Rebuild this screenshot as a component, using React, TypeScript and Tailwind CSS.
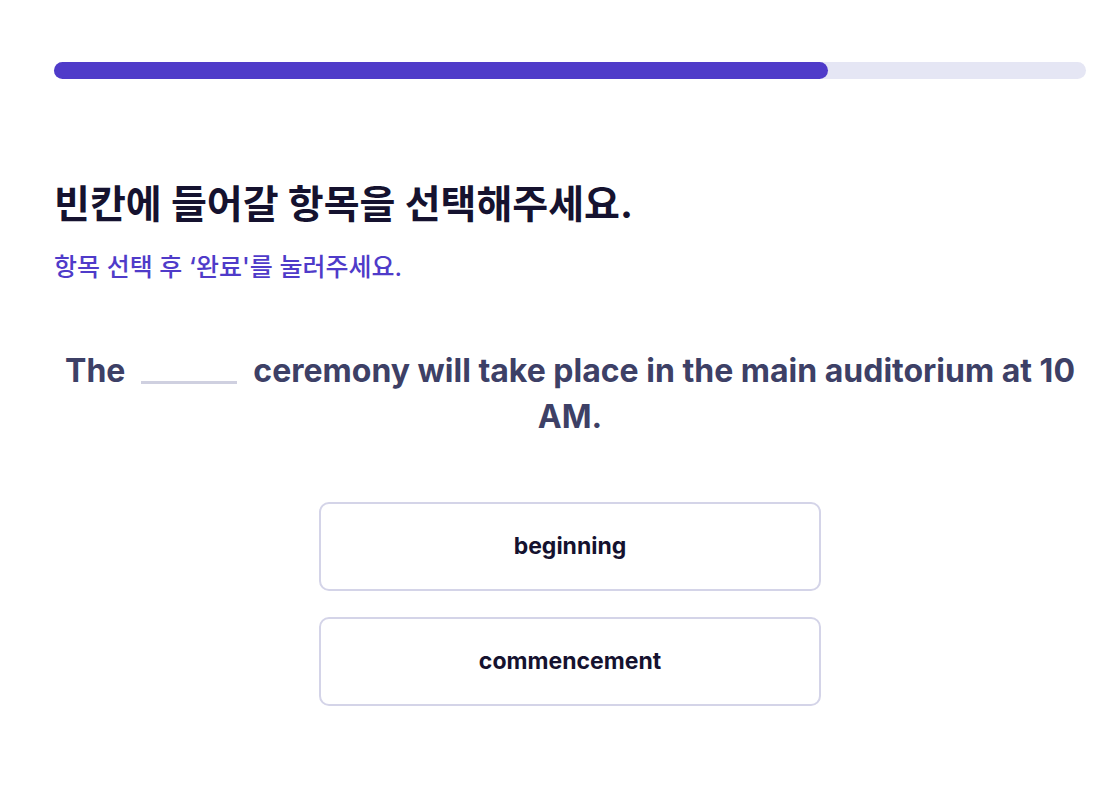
const FONT = "font-['Inter','Noto_Sans_CJK_KR',sans-serif]";

const OPTIONS = ["beginning", "commencement"];

export default function App() {
  return (
    <div className={`min-h-screen bg-white ${FONT}`}>
      <div className="px-[54px] pt-[62px] pr-[28px]">
        <div className="h-[17px] w-full rounded-full bg-[#e5e6f4]">
          <div className="h-full w-[75%] rounded-full bg-[#4f3bc9]" />
        </div>

        <h1 className="mt-[98px] text-[39px] font-bold leading-[54px] text-[#15122f]">
          빈칸에 들어갈 항목을 선택해주세요.
        </h1>
        <p className="mt-[20px] text-[25px] font-medium leading-[32px] text-[#4f3bc9]">
          항목 선택 후 ‘완료'를 눌러주세요.
        </p>

        <p className="mt-[65px] text-center text-[32px] font-bold leading-[46px] text-[#3d4066]">
          The
          <span className="mx-[16px] inline-block h-[3px] w-[96px] bg-[#cfd0e0] align-[-2px]" />
          ceremony will take place in the main auditorium at 10 AM.
        </p>

        <div className="mx-auto mt-[62px] flex w-[502px] flex-col gap-[26px]">
          {OPTIONS.map((opt) => (
            <button
              key={opt}
              className="h-[89px] w-full rounded-[10px] border-2 border-[#d4d4e8] bg-white text-[23px] font-bold text-[#15122f]"
            >
              {opt}
            </button>
          ))}
        </div>
      </div>
    </div>
  );
}
